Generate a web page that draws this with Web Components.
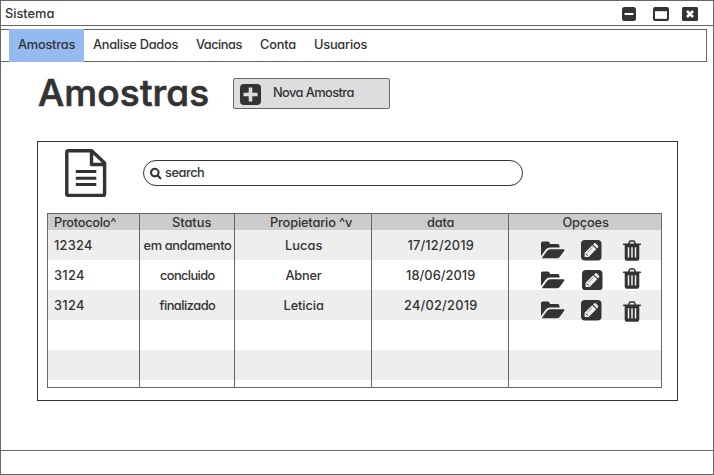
<!DOCTYPE html>
<html lang="pt">
<head>
<meta charset="utf-8">
<title>Sistema</title>
<style>
html,body{margin:0;height:100%;overflow:hidden;background:#fff}
</style>
</head>
<body>
<app-window></app-window>
<script>
const define = (name, html, connect) => {
  const t = document.createElement('template');
  t.innerHTML = html;
  customElements.define(name, class extends HTMLElement {
    connectedCallback() {
      if (this.shadowRoot) return;
      this.attachShadow({mode: 'open'}).append(t.content.cloneNode(true));
      if (connect) connect(this, this.shadowRoot);
    }
  });
};

/* Single-line label, tracked so that it fills the width given in "w". */
define('ui-label', `<style>
:host{display:block;flex:none;white-space:pre;line-height:18px;font-size:12.8px}
span{display:inline-block}
</style><span></span>`, (el, root) => {
  const s = root.querySelector('span');
  s.textContent = el.getAttribute('text');
  const w = +el.getAttribute('w');
  el.style.width = w + 'px';
  const space = (w + .3 - s.getBoundingClientRect().width) / (s.textContent.length - 1);
  s.style.letterSpacing = space.toFixed(3) + 'px';
});

const icons = {
  minus: [14, 14, '<rect width="14" height="14" rx="2.5" fill="#333"/><rect x="2.5" y="6" width="9" height="2" rx=".4" fill="#fff"/>'],
  max: [16, 14, '<rect width="16" height="14" rx="2" fill="#333"/><rect x="2" y="4.2" width="12" height="7.6" fill="#fff"/>'],
  close: [16, 14, '<rect width="16" height="14" rx="1.5" fill="#333"/><path d="M5 4l6 6M11 4l-6 6" stroke="#fff" stroke-width="2.5"/>'],
  plus: [21, 21, '<rect width="21" height="21" rx="4" fill="#333"/><path d="M10.5 3.5v14M3.5 10.5h14" stroke="#ddd" stroke-width="3.6"/>'],
  file: [41, 48, '<path d="M3.2 1.8H26.7L39.6 14V45Q39.6 46.4 38.2 46.4H3.2Q1.8 46.4 1.8 45V3.2Q1.8 1.8 3.2 1.8ZM26.5 2V15.5H39" fill="none" stroke="#333" stroke-width="3.4" stroke-linejoin="round"/><path d="M10.8 22.5h20.5M10.8 29.3h20.5M10.8 35.6h20.5" stroke="#333" stroke-width="3"/>'],
  search: [12, 12, '<circle cx="4.8" cy="4.6" r="3.8" fill="none" stroke="#333" stroke-width="2.1"/><path d="M7.6 7.5l2.8 2.8" stroke="#333" stroke-width="2.2" stroke-linecap="round"/>'],
  folder: [24, 18, '<path d="M0 15V2.2Q0 .4 1.8 .4H6.8Q8.6 .4 8.8 2.2V3H16.5Q18.5 3 18.5 5V6.6H9Q6.4 6.6 4.7 8.6Z" fill="#333"/><path d="M1 16.8L6 10Q7.3 8.2 9.3 8.2H22.6Q24.2 8.3 23.2 9.8L18.8 15.8Q17.7 17.3 15.8 17.3H1.5Q.7 17.3 1 16.8Z" fill="#333"/>'],
  edit: [21, 21, '<rect width="20.5" height="20.5" rx="4" fill="#333"/><path d="M3.6 16.9V12.8L11.2 5.2L15.3 9.3L7.7 16.9ZM12 4.4L13 3.5Q14 2.7 15 3.6L16.9 5.5Q17.7 6.5 16.9 7.5L16.1 8.5Z" fill="#eee"/><path d="M4.8 13.6L6.9 15.7" stroke="#333" stroke-width="1"/><path d="M6.4 12.3L11.4 7.4" stroke="#333" stroke-width=".5"/>'],
  trash: [18, 21, '<path d="M5.6 4L6.5 1.7Q6.8 1 7.5 1H10.5Q11.2 1 11.5 1.7L12.4 4" fill="none" stroke="#333" stroke-width="1.5"/><path d="M.6 3.4H17.4Q18 3.4 18 4V4.4Q18 5 17.4 5H16.3V18.5Q16.3 20.7 14.3 20.7H3.7Q1.7 20.7 1.7 18.5V5H.6Q0 5 0 4.4V4Q0 3.4 .6 3.4Z" fill="#333"/><path d="M5.5 7.3V17.6M9 7.3V17.6M12.5 7.3V17.6" stroke="#eee" stroke-width="1.5"/>']
};
define('ui-icon', `<style>:host{display:block;flex:none}svg{display:block;overflow:visible}</style><div></div>`, (el, root) => {
  const [w, h, body] = icons[el.getAttribute('name')];
  root.querySelector('div').innerHTML = `<svg width="${w}" height="${h}" viewBox="0 0 ${w} ${h}">${body}</svg>`;
});

define('title-bar', `<style>
:host{display:flex;box-sizing:border-box;height:25px;border-bottom:1px solid #666;padding:3px 15px 0 4px}
ui-label{margin-top:1px}
ui-icon{margin-top:3px}
ui-icon[name=minus]{margin-left:auto}
ui-icon[name=max]{margin:3px 13px 0 17px}
</style><ui-label text="Sistema" w="49"></ui-label><ui-icon name="minus"></ui-icon><ui-icon name="max"></ui-icon><ui-icon name="close"></ui-icon>`);

define('nav-item', `<style>
:host{display:block;padding:6px 9px 0;height:26px}
:host([active]){background:#95baf2;margin:-1px 0;padding-top:7px}
</style><slot></slot>`);

define('nav-bar', `<style>
:host{display:flex;box-sizing:border-box;height:33px;margin:3px 6px 0 -1px;border:1px solid #666;padding-left:8px}
</style>
<nav-item active><ui-label text="Amostras" w="57"></ui-label></nav-item>
<nav-item><ui-label text="Analise Dados" w="85"></ui-label></nav-item>
<nav-item><ui-label text="Vacinas" w="46"></ui-label></nav-item>
<nav-item><ui-label text="Conta" w="36"></ui-label></nav-item>
<nav-item><ui-label text="Usuarios" w="53"></ui-label></nav-item>`);

define('page-heading', `<style>
:host{display:flex;padding:16px 0 0 37px;height:47px}
.title{margin-top:-9px;width:195px}
.title ui-label{font-size:37px;line-height:48px;-webkit-text-stroke:.7px #333;stroke-linejoin:round}
button{all:unset;box-sizing:border-box;display:flex;width:157px;height:31px;border:1px solid #666;border-radius:2px;background:#ddd;padding:5px 0 0 6px}
button ui-label{margin:0 0 0 12px}
</style><div class="title"><ui-label text="Amostras" w="171"></ui-label></div>
<button><ui-icon name="plus"></ui-icon><ui-label text="Nova Amostra" w="81"></ui-label></button>`);

define('search-box', `<style>
:host{display:flex;box-sizing:border-box;width:380px;height:26px;border:1px solid #333;border-radius:13px;padding:3px 0 0 5.5px}
ui-icon{margin:4px 3.5px 0 0}
</style><ui-icon name="search"></ui-icon><ui-label text="search" w="39.5"></ui-label>`);

define('sample-table', `<style>
:host{display:flex;flex-direction:column;box-sizing:border-box;width:615px;height:175px;border:1px solid #666;overflow:hidden}
.row{display:grid;grid-template-columns:92px 95px 137px 137px 1fr;height:30px;flex:none}
.row>div{border-right:1px solid #666;display:flex;justify-content:center;padding-top:7px}
.row>div:first-child{justify-content:flex-start;padding-left:6px}
.row>div:last-child{border:0}
.row:nth-of-type(even){background:#eee}
.row.head{height:16px;background:#ccc}
.row.head>div{padding-top:0}
.row>div:nth-child(n+2){padding-left:1px}
.row.head>div:nth-child(2){padding-left:9px}
.row.head>div:nth-child(3){padding-left:16px}
.row>div.actions{justify-content:flex-start;padding:0 0 0 32px}
.row.last{height:7px}
.row:nth-of-type(n+5)>div{padding-top:0}
</style>`, (el, root) => {
  const label = ([t, w]) => t ? `<ui-label text="${t}" w="${w}"></ui-label>` : '';
  const actions = ([folder, edit, trash, shift]) => `<div class="actions">
    <ui-icon name="folder" style="margin-top:${folder}px"></ui-icon>
    <ui-icon name="edit" style="margin:${edit}px 0 0 ${16 + shift}px"></ui-icon>
    <ui-icon name="trash" style="margin:${trash}px 0 0 ${21 - shift}px"></ui-icon></div>`;
  const row = (cells, cls = '', acts) => `<div class="row ${cls}">${cells.map(c => `<div>${label(c)}</div>`).join('')}${acts ? actions(acts) : ''}</div>`;
  const empty = ['', '', '', '', ''];
  const box = document.createElement('template');
  box.innerHTML =
    row([['Protocolo^', 62], ['Status', 39], ['Propietario ^v', 82], ['data', 27], ['Opçoes', 46]], 'head') +
    row([['12324', 38], ['em andamento', 88], ['Lucas', 37], ['17/12/2019', 66]], '', [10.5, 10, 10, 0]) +
    row([['3124', 30], ['concluido', 55], ['Abner', 36], ['18/06/2019', 69]], '', [10.5, 10, 8, 1]) +
    row([['3124', 30], ['finalizado', 56], ['Leticia', 40], ['24/02/2019', 73]], '', [11, 10, 11, 0]) +
    row(empty) + row(empty) + row(empty, 'last');
  root.append(box.content);
});

define('sample-panel', `<style>
:host{display:block;box-sizing:border-box;width:641px;height:260px;margin:16px 0 0 36px;border:1px solid #333;padding:7px 0 0 9px}
.tools{display:flex;height:64px;padding-left:18px}
search-box{margin:11px 0 0 37px}
</style><div class="tools"><ui-icon name="file"></ui-icon><search-box></search-box></div><sample-table></sample-table>`);

define('app-window', `<style>
:host{display:flex;flex-direction:column;box-sizing:border-box;width:714px;height:475px;border:1px solid #666;background:#fff;color:#333;font-family:Inter,"Open Sans",sans-serif;font-weight:500;font-feature-settings:"cv11" 1}
footer{height:23px;border-top:1px solid #666;margin-top:auto}
</style><title-bar></title-bar><nav-bar></nav-bar><page-heading></page-heading><sample-panel></sample-panel><footer></footer>`);
</script>
</body>
</html>
